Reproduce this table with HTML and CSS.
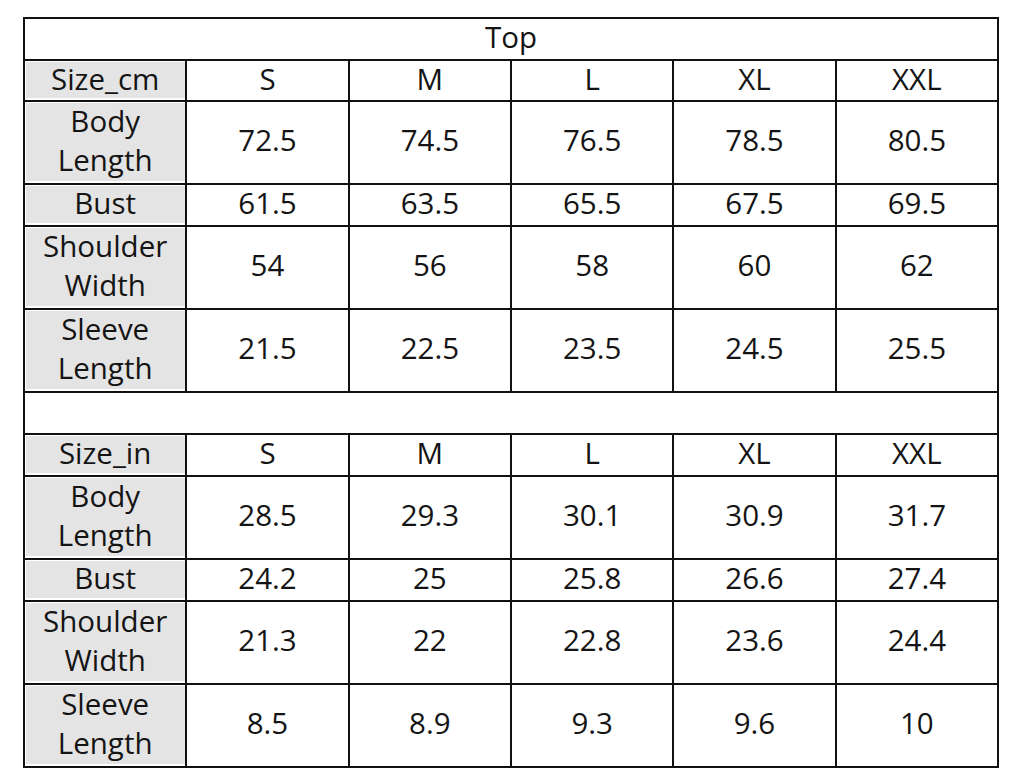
FILE: index.html
```html
<!DOCTYPE html>
<html lang="en">
<head>
<meta charset="utf-8">
<title>Top size chart</title>
<link rel="stylesheet" href="styles.css">
</head>
<body>
<table class="chart">
  <colgroup>
    <col><col><col><col><col><col>
  </colgroup>
  <tbody>
    <tr class="r1"><td class="title" colspan="6">Top</td></tr>
    <tr class="r1 tight"><th>Size_cm</th><td>S</td><td>M</td><td>L</td><td>XL</td><td>XXL</td></tr>
    <tr class="r2"><th>Body<br>Length</th><td>72.5</td><td>74.5</td><td>76.5</td><td>78.5</td><td>80.5</td></tr>
    <tr class="r1"><th>Bust</th><td>61.5</td><td>63.5</td><td>65.5</td><td>67.5</td><td>69.5</td></tr>
    <tr class="r2"><th>Shoulder<br>Width</th><td>54</td><td>56</td><td>58</td><td>60</td><td>62</td></tr>
    <tr class="r2"><th>Sleeve<br>Length</th><td>21.5</td><td>22.5</td><td>23.5</td><td>24.5</td><td>25.5</td></tr>
    <tr class="r1"><td class="blank" colspan="6"></td></tr>
    <tr class="r1"><th>Size_in</th><td>S</td><td>M</td><td>L</td><td>XL</td><td>XXL</td></tr>
    <tr class="r2"><th>Body<br>Length</th><td>28.5</td><td>29.3</td><td>30.1</td><td>30.9</td><td>31.7</td></tr>
    <tr class="r1"><th>Bust</th><td>24.2</td><td>25</td><td>25.8</td><td>26.6</td><td>27.4</td></tr>
    <tr class="r2"><th>Shoulder<br>Width</th><td>21.3</td><td>22</td><td>22.8</td><td>23.6</td><td>24.4</td></tr>
    <tr class="r2"><th>Sleeve<br>Length</th><td>8.5</td><td>8.9</td><td>9.3</td><td>9.6</td><td>10</td></tr>
  </tbody>
</table>
</body>
</html>
```

FILE: styles.css
```css
html, body {
  margin: 0;
  padding: 0;
  background: #fff;
}

body {
  padding: 17px 0 0 23px;
  font-family: "Open Sans", "Noto Sans", sans-serif;
  color: #141414;
}

.chart {
  border-collapse: separate;
  border-spacing: 0;
  table-layout: fixed;
  width: 976px;
  border-top: 2px solid #111;
  border-left: 2px solid #111;
}

.chart th,
.chart td {
  box-sizing: border-box;
  border-right: 2px solid #111;
  border-bottom: 2px solid #111;
  padding: 0 0 4px;
  text-align: center;
  vertical-align: middle;
  font-size: 29.5px;
  font-weight: 400;
  white-space: nowrap;
}

.chart th {
  background: #e4e4e4;
  box-shadow: inset 1px 1px 0 #fff, inset 0 -2px 0 #fff;
}

.r1 th,
.r1 td {
  height: 42px;
  line-height: 34px;
}

.tight th,
.tight td {
  height: 41px;
}

.r2 th,
.r2 td {
  height: 83px;
  line-height: 38.5px;
}
```
